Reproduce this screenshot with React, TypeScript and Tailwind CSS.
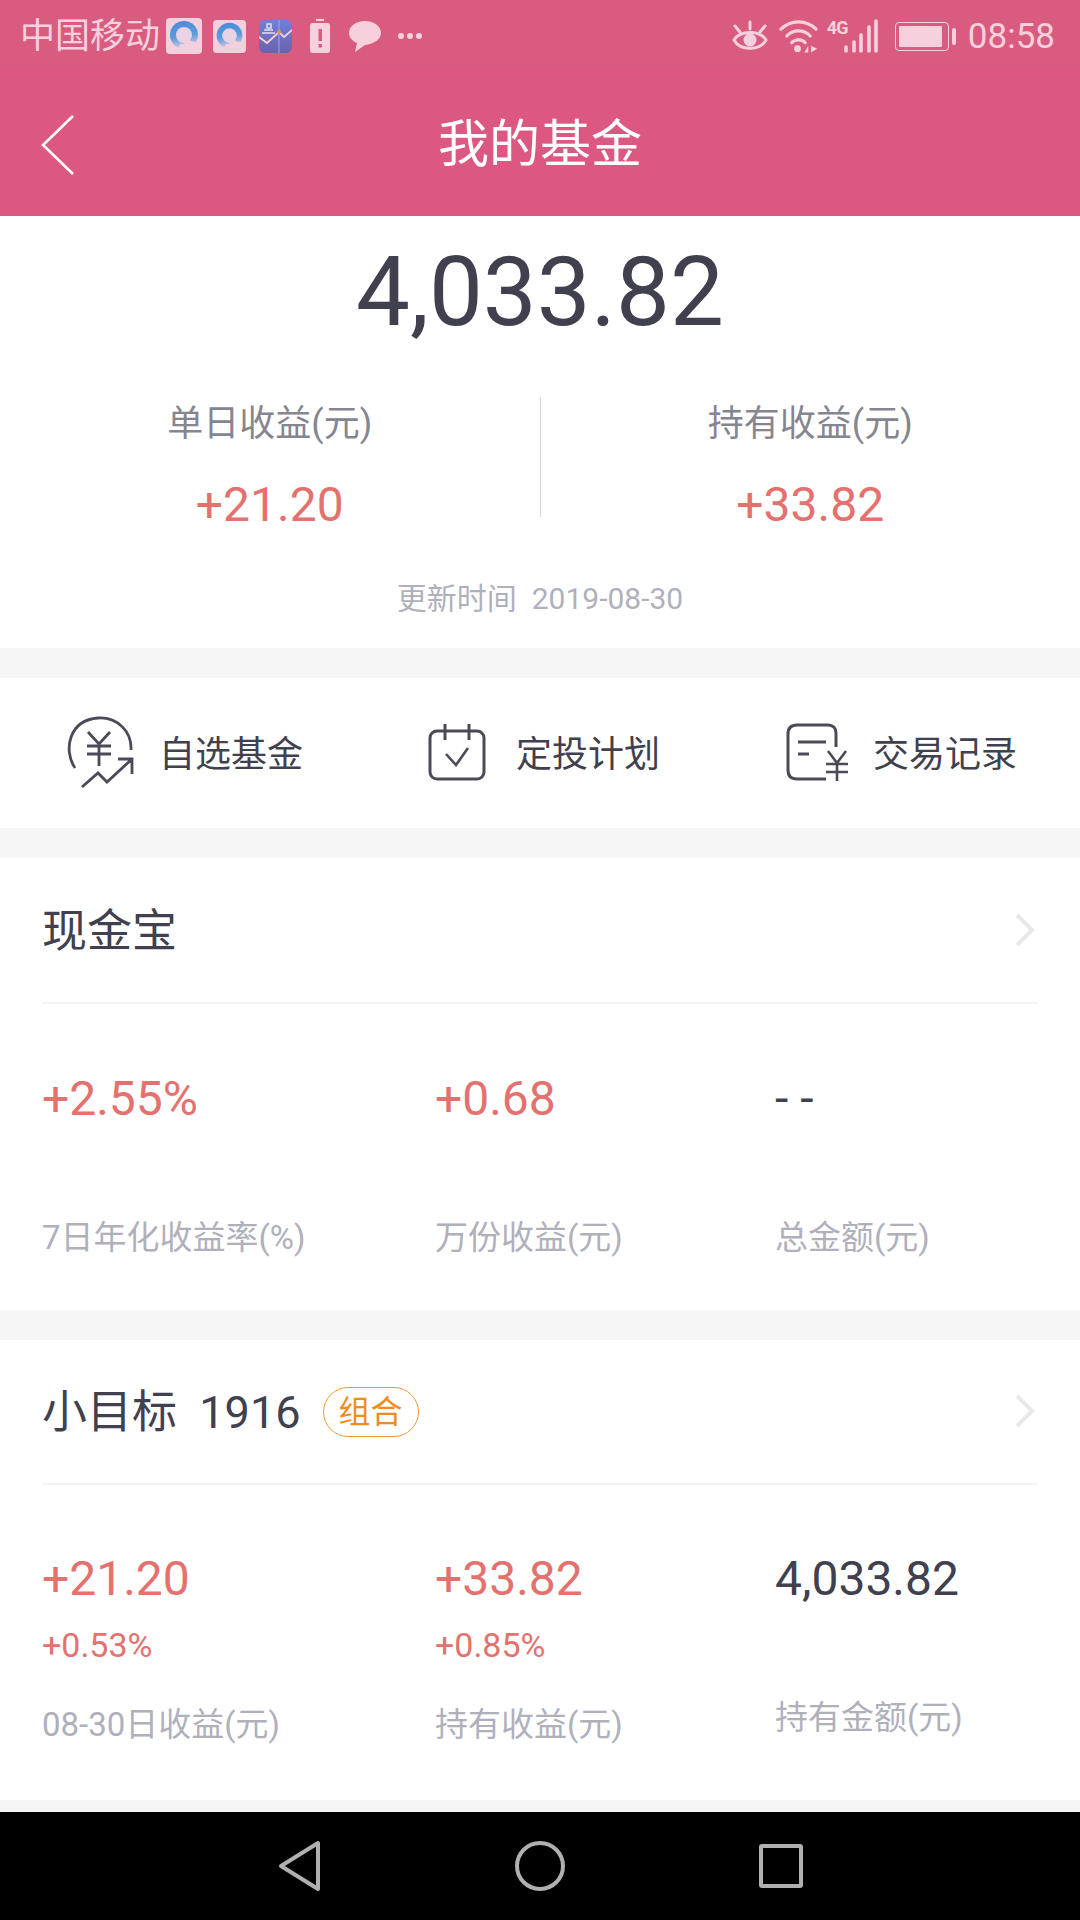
import React from 'react';

const font = 'font-[Roboto,"Noto_Sans_CJK_SC",sans-serif]';

const QQIcon: React.FC<{ id: string; big?: boolean }> = ({ id, big }) => (
  <svg viewBox="0 0 36 36" className={big ? 'w-[36px] h-[36px]' : 'w-[33px] h-[33px]'}>
    <defs>
      <linearGradient id={id} x1="0.3" y1="0" x2="0.5" y2="1">
        <stop offset="0" stopColor="#4a8ade" />
        <stop offset="0.55" stopColor="#5b9cdc" />
        <stop offset="1" stopColor="#e8cfe0" />
      </linearGradient>
    </defs>
    <rect width="36" height="36" rx="4" fill="#f3d0dc" />
    <circle cx="18" cy="17" r="14" fill={`url(#${id})`} />
    <circle cx="18" cy="17" r="8" fill="#e8d3e2" />
    <path d="M13 32 C11 28 15 25 18 26 C19 22 25 21 27 24 C31 23 34 27 33 32Z" fill="#f1cfdc" />
  </svg>
);

const StatusBar: React.FC = () => (
  <div className="h-[66px] bg-[#d95c80] flex items-center justify-between pl-[20px] pr-[25px] pt-[7px] text-[#f6d0dc]">
    <div className="flex items-center">
      <span className="text-[35px] leading-none mr-[6px]">中国移动</span>
      <QQIcon id="qq-a" big />
      <span className="w-[11px]" />
      <QQIcon id="qq-b" />
      <span className="w-[13px]" />
      <svg viewBox="0 0 33 33" className="w-[33px] h-[33px]">
        <defs>
          <linearGradient id="chart-bg" x1="0" y1="0" x2="0" y2="1">
            <stop offset="0" stopColor="#6f80da" />
            <stop offset="1" stopColor="#6a62ae" />
          </linearGradient>
        </defs>
        <rect width="33" height="33" rx="6" fill="url(#chart-bg)" />
        <path d="M0 17 L8 23 L20 12 L25 17 L33 10" fill="none" stroke="#f3d0dc" strokeWidth="1.8" />
        <path d="M20 0 V33" stroke="#a9a3d8" strokeWidth="1" />
        <circle cx="20" cy="12" r="2" fill="#e0934e" />
        <path d="M3 13 H16 M5 10 H14 M8 4 H12 V8 H8Z" fill="none" stroke="#e6dcef" strokeWidth="1.5" />
      </svg>
      <span className="w-[18px]" />
      <svg viewBox="0 0 20 34" className="w-[20px] h-[34px]">
        <rect x="6" y="0" width="8" height="2" fill="#f6d0dc" />
        <rect x="0" y="4" width="20" height="30" rx="3" fill="#f6d0dc" />
        <rect x="8.5" y="10" width="3.5" height="12" fill="#d95c80" />
        <rect x="8.5" y="25" width="3.5" height="3.5" fill="#d95c80" />
      </svg>
      <span className="w-[18px]" />
      <svg viewBox="0 0 34 34" className="w-[34px] h-[34px]">
        <path d="M17 2 C26 2 33 7 33 14 C33 21 25 25 17 26 L7 33 L9 24 C4 22 1 18 1 14 C1 7 8 2 17 2Z" fill="#f6d0dc" />
      </svg>
      <span className="w-[16px]" />
      <span className="flex gap-[3px]">
        <span className="w-[6px] h-[6px] rounded-full bg-[#f6d0dc]" />
        <span className="w-[6px] h-[6px] rounded-full bg-[#f6d0dc]" />
        <span className="w-[6px] h-[6px] rounded-full bg-[#f6d0dc]" />
      </span>
    </div>
    <div className="flex items-center">
      <svg viewBox="0 0 36 32" className="w-[36px] h-[32px]">
        <path d="M2 20 C8 10 28 10 34 20 C28 31 8 31 2 20Z" fill="none" stroke="#f6d0dc" strokeWidth="3" />
        <circle cx="18" cy="20" r="6.5" fill="#f6d0dc" />
        <path d="M18 2 V9 M3 6 L8 12 M33 6 L28 12" stroke="#f6d0dc" strokeWidth="3" strokeLinecap="round" />
      </svg>
      <span className="w-[11px]" />
      <svg viewBox="0 0 40 34" className="w-[39px] h-[34px]">
        <path d="M2 10 C12 0 28 0 38 10" fill="none" stroke="#f6d0dc" strokeWidth="3.2" strokeLinecap="round" />
        <path d="M8 17 C14 10 26 10 32 17" fill="none" stroke="#f6d0dc" strokeWidth="3.2" strokeLinecap="round" />
        <path d="M13 24 C16 20 24 20 27 24" fill="none" stroke="#f6d0dc" strokeWidth="3.2" strokeLinecap="round" />
        <circle cx="19" cy="30" r="3.5" fill="#f6d0dc" />
        <path d="M26 34 L30 27 V34Z M33 27 V34 L39 30Z" fill="#f6d0dc" />
      </svg>
      <span className="w-[9px]" />
      <div className="relative w-[52px] h-[34px]">
        <span className="absolute left-0 top-0 text-[18px] leading-none font-bold tracking-[-1px]">4G</span>
        <svg viewBox="0 0 36 34" className="absolute right-0 bottom-0 w-[36px] h-[34px]">
          <path d="M3 28 V32 M11 23 V32 M18 16 V32 M26 8 V32 M33 2 V32" stroke="#f6d0dc" strokeWidth="3.6" strokeLinecap="round" />
        </svg>
      </div>
      <span className="w-[16px]" />
      <div className="w-[54px] h-[29px] border border-[#f6d0dc] rounded-[4px] p-[3px]">
        <div className="w-[43px] h-full bg-[#f6d0dc] rounded-[1px]" />
      </div>
      <div className="w-[4px] h-[17px] bg-[#f6d0dc] rounded-[2px] ml-[3px]" />
      <span className="text-[35px] leading-none ml-[12px]">08:58</span>
    </div>
  </div>
);

const ChevronRight: React.FC = () => (
  <svg viewBox="0 0 22 34" className="w-[22px] h-[34px]">
    <path d="M3 2 L18 17 L3 32" fill="none" stroke="#e8e8ec" strokeWidth="4" />
  </svg>
);

const Cell: React.FC<{ value: string; sub?: string; label: string; dark?: boolean; labelClass: string }> = ({ value, sub, label, dark, labelClass }) => (
  <div className="flex flex-col">
    <div className={`text-[48px] leading-[54px] ${dark ? 'text-[#40404f]' : 'text-[#e5716f]'}`}>{value}</div>
    {sub && <div className="text-[34px] leading-[36px] mt-[21px] text-[#e5716f]">{sub}</div>}
    <div className={`text-[33px] leading-[40px] text-[#b0b0bb] ${labelClass}`}>{label}</div>
  </div>
);

const Gap: React.FC<{ h: string }> = ({ h }) => <div className={`bg-[#f5f5f5] ${h}`} />;

export default function App() {
  return (
    <div className={`w-[1080px] h-[1920px] bg-white flex flex-col overflow-hidden ${font}`}>
      <StatusBar />
      <div className="h-[150px] bg-[#dd5880] relative flex items-center justify-center">
        <svg viewBox="0 0 34 62" className="absolute left-[41px] top-[48px] w-[34px] h-[62px]">
          <path d="M32 2 L2 31 L32 60" fill="none" stroke="#fff" strokeWidth="2.6" />
        </svg>
        <span className="text-white text-[51px] leading-none mt-[7px]">我的基金</span>
      </div>

      {/* summary */}
      <div className="h-[432px] flex flex-col items-center">
        <div className="text-[#40404f] text-[96px] leading-none mt-[28px]">4,033.82</div>
        <div className="flex w-full mt-[57px] h-[120px]">
          <div className="flex-1 flex flex-col items-center">
            <div className="text-[#85858f] text-[36px] leading-[54px]">单日收益(元)</div>
            <div className="text-[#e5716f] text-[48px] leading-[54px] mt-[27px]">+21.20</div>
          </div>
          <div className="w-px bg-[#d8d8d8]" />
          <div className="flex-1 flex flex-col items-center">
            <div className="text-[#85858f] text-[36px] leading-[54px]">持有收益(元)</div>
            <div className="text-[#e5716f] text-[48px] leading-[54px] mt-[27px]">+33.82</div>
          </div>
        </div>
        <div className="text-[#b0b0bb] text-[30px] leading-none mt-[67px] whitespace-pre">更新时间  2019-08-30</div>
      </div>
      <Gap h="h-[30px]" />

      {/* shortcuts */}
      <div className="h-[150px] flex items-center text-[#40404f] text-[36px] pt-[2px]">
        <div className="flex items-center ml-[66px]">
          <svg viewBox="0 0 68 72" className="w-[68px] h-[72px] -mt-[3px]">
            <path d="M9 52 C-3 34 3 4 32 2 C52 1 66 16 65 34" fill="none" stroke="#4b4b58" strokeWidth="2.8" />
            <path d="M22 16 L33 28 L44 16 M33 28 V50 M21 30 H45 M21 38 H45" fill="none" stroke="#4b4b58" strokeWidth="2.8" />
            <path d="M16 71 L32 57 L41 66 L66 43 M52 43 H66 V58" fill="none" stroke="#4b4b58" strokeWidth="2.8" />
          </svg>
          <span className="ml-[25px] mt-[3px]">自选基金</span>
        </div>
        <div className="flex items-center ml-[125px]">
          <svg viewBox="0 0 58 58" className="w-[58px] h-[58px] -mt-[3px]">
            <rect x="2" y="8" width="54" height="48" rx="7" fill="none" stroke="#4b4b58" strokeWidth="3" />
            <path d="M17 1 V17 M41 1 V17" stroke="#4b4b58" strokeWidth="3" />
            <path d="M18 31 L28 42 L40 25" fill="none" stroke="#4b4b58" strokeWidth="2.6" />
          </svg>
          <span className="ml-[30px] mt-[3px]">定投计划</span>
        </div>
        <div className="flex items-center ml-[126px]">
          <svg viewBox="0 0 62 58" className="w-[62px] h-[58px] -mt-[3px]">
            <path d="M50 24 V10 C50 5 47 2 42 2 H11 C5 2 2 5 2 11 V47 C2 53 5 56 11 56 H40" fill="none" stroke="#4b4b58" strokeWidth="3" />
            <path d="M12 19 H40 M12 31 H23" stroke="#4b4b58" strokeWidth="3" />
            <path d="M42 28 L51 40 L60 28 M51 40 V58 M40 41 H62 M40 49 H62" fill="none" stroke="#4b4b58" strokeWidth="2.6" />
          </svg>
          <span className="ml-[25px] mt-[3px]">交易记录</span>
        </div>
      </div>
      <Gap h="h-[30px]" />

      {/* cash fund */}
      <div className="h-[453px] px-[42px] flex flex-col">
        <div className="h-[146px] flex items-center justify-between border-b-2 border-[#f3f3f3] pr-[2px]">
          <span className="text-[45px] leading-none text-[#40404f] mt-[4px]">现金宝</span>
          <ChevronRight />
        </div>
        <div className="grid grid-cols-[393px_340px_1fr] pt-[68px]">
          <Cell value="+2.55%" label="7日年化收益率(%)" labelClass="mt-[92px]" />
          <Cell value="+0.68" label="万份收益(元)" labelClass="mt-[92px]" />
          <Cell value="- -" label="总金额(元)" dark labelClass="mt-[92px]" />
        </div>
      </div>
      <Gap h="h-[30px]" />

      {/* goal fund */}
      <div className="h-[460px] px-[42px] flex flex-col">
        <div className="h-[145px] flex items-center border-b-2 border-[#f3f3f3] pr-[2px]">
          <span className="text-[45px] leading-none text-[#40404f] whitespace-pre mt-[2px]">小目标  1916</span>
          <span className="ml-[22px] w-[96px] h-[50px] rounded-full border border-[#ee9a3c] text-[#f08c1e] text-[32px] flex items-center justify-center">组合</span>
          <span className="ml-auto flex -mt-[2px]"><ChevronRight /></span>
        </div>
        <div className="grid grid-cols-[393px_340px_1fr] pt-[67px]">
          <Cell value="+21.20" sub="+0.53%" label="08-30日收益(元)" labelClass="mt-[42px]" />
          <Cell value="+33.82" sub="+0.85%" label="持有收益(元)" labelClass="mt-[42px]" />
          <Cell value="4,033.82" label="持有金额(元)" dark labelClass="mt-[92px]" />
        </div>
      </div>
      <Gap h="h-[12px]" />

      {/* android nav */}
      <div className="h-[108px] bg-black flex items-center">
        <svg viewBox="0 0 44 52" className="w-[44px] h-[52px] ml-[278px]">
          <path d="M3 26 L40 3 V49 Z" fill="none" stroke="#b0b0b0" strokeWidth="4" strokeLinejoin="round" />
        </svg>
        <div className="w-[50px] h-[50px] rounded-full border-4 border-[#b0b0b0] ml-[193px]" />
        <div className="w-[44px] h-[44px] rounded-[3px] border-4 border-[#b0b0b0] ml-[194px]" />
      </div>
    </div>
  );
}
